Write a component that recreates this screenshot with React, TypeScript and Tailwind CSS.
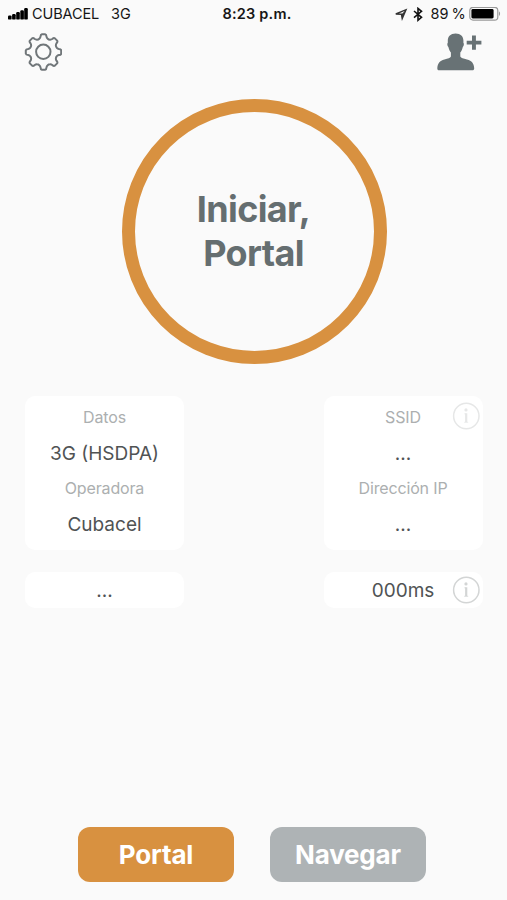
const gearTeeth = 8;

function gearPath(cx: number, cy: number) {
  const point = (angle: number, r: number, t: number) => {
    const x = cx + r * Math.cos(angle) - t * Math.sin(angle);
    const y = cy + r * Math.sin(angle) + t * Math.cos(angle);
    return `${x.toFixed(2)} ${y.toFixed(2)}`;
  };
  let d = "";
  for (let i = 0; i < gearTeeth; i++) {
    const a = (i * 2 * Math.PI) / gearTeeth - Math.PI / 2;
    const mid = a + Math.PI / gearTeeth;
    d += `${i === 0 ? "M" : "L"}${point(a, 13.3, -4.2)}`;
    d += `Q${point(a, 14.2, -3.2)} ${point(a, 15.4, -3)}`;
    d += `Q${point(a, 17.5, -2.9)} ${point(a, 17.7, -1.6)}`;
    d += `L${point(a, 17.7, 1.6)}`;
    d += `Q${point(a, 17.5, 2.9)} ${point(a, 15.4, 3)}`;
    d += `Q${point(a, 14.2, 3.2)} ${point(a, 13.3, 4.2)}`;
    d += `Q${point(mid, 13.4, 0)} ${point(a + (2 * Math.PI) / gearTeeth, 13.3, -4.2)}`;
  }
  return d + "Z";
}

function GearIcon() {
  return (
    <svg width="38" height="38" viewBox="0 0 38 38" fill="none" stroke="#707679" strokeWidth="2" strokeLinejoin="round">
      <path d={gearPath(19.5, 19)} />
      <circle cx="19.3" cy="18.8" r="7.2" />
    </svg>
  );
}

function AddUserIcon() {
  return (
    <svg width="45" height="38" viewBox="0 0 45 38" fill="#687275">
      <path d="M18.6 0.4C23.6 0.4 26.4 3.3 26.4 7.6V9.8C27.2 10.4 27 13.2 25.8 13.9C25.2 16.6 24.4 18.1 23.3 19.4V23.6C24 25.2 26.3 25.6 30 26.4C34.9 27.6 36.9 30.2 37.2 35.2C37.2 36.7 36.6 37.3 35.2 37.3H2.2C0.8 37.3 0.3 36.7 0.3 35.2C0.6 30.2 2.6 27.6 7.4 26.4C11.1 25.6 13.2 25.2 13.9 23.6V19.4C12.8 18.1 12 16.6 11.4 13.9C10.2 13.2 10 10.4 10.8 9.8V7.6C10.8 3.3 13.6 0.4 18.6 0.4Z" />
      <path d="M35 2.4H38.9V7.7H44.4V11.5H38.9V16.8H35V11.5H29.7V7.7H35Z" />
    </svg>
  );
}

function InfoIcon({ className }: { className: string }) {
  return (
    <svg width="28" height="28" viewBox="0 0 28 28" fill="none" className={className}>
      <circle cx="14.3" cy="14" r="12.7" stroke="currentColor" strokeWidth="1.5" />
      <circle cx="14" cy="7.9" r="1.6" fill="currentColor" />
      <path d="M14.2 11.3V20.2" stroke="currentColor" strokeWidth="2.2" />
      <path d="M12.4 11.8H14.2M12.2 20.3H16.2" stroke="currentColor" strokeWidth="0.8" />
    </svg>
  );
}

function StatusBar() {
  return (
    <div className="grid h-7 grid-cols-[1fr_auto_1fr] items-center pl-2 pr-1.5 text-[14.5px] leading-none text-[#161616]">
      <div className="flex items-center">
        <svg width="20" height="12" viewBox="0 0 20 12" fill="#000">
          <rect x="0" y="7.4" width="3.6" height="4.2" rx="1.2" />
          <rect x="4.1" y="6" width="3.6" height="5.6" rx="1.2" />
          <rect x="8.2" y="4" width="3.6" height="7.6" rx="1.2" />
          <rect x="12.3" y="2.2" width="3.6" height="9.4" rx="1.2" />
          <rect x="16.2" y="0" width="3.6" height="11.6" rx="1.2" />
        </svg>
        <span className="ml-1 w-[79px] tracking-[-0.1px]">CUBACEL</span>
        <span>3G</span>
      </div>
      <span className="pl-[5px] font-semibold tracking-[0.2px]">8:23 p.m.</span>
      <div className="flex items-center justify-end">
        <svg width="13" height="13" viewBox="0 0 13 13" fill="none" stroke="#333" strokeWidth="1.4">
          <path d="M0.8 6L11 1.7L7.2 10.6L6.4 6.2Z" />
          <path d="M6.5 6.2L11 2L7.3 10Z" fill="#333" stroke="none" />
        </svg>
        <svg width="10" height="15" viewBox="0 0 10 15" fill="none" stroke="#111" strokeWidth="1.6" className="ml-[5px]">
          <path d="M1 4L8.5 10.3L5 13.2V1.4L8.5 4.3L1 10.6" />
        </svg>
        <span className="ml-[7px] tracking-[0.2px] [word-spacing:-1.5px]">89 %</span>
        <svg width="32" height="14" viewBox="0 0 32 14" className="ml-[3px]">
          <rect x="0.8" y="0.3" width="28" height="12.8" rx="3.2" fill="none" stroke="#999" strokeWidth="1.2" />
          <rect x="2.4" y="2" width="22.2" height="9.4" rx="1.4" fill="#000" />
          <path d="M30 4.6C31.4 5.1 31.4 8.5 30 9Z" fill="#999" />
        </svg>
      </div>
    </div>
  );
}

const connections = [
  {
    id: "mobile",
    rows: [
      { label: "Datos", value: "3G (HSDPA)" },
      { label: "Operadora", value: "Cubacel" },
    ],
    result: "...",
    info: false,
  },
  {
    id: "wifi",
    rows: [
      { label: "SSID", value: "..." },
      { label: "Dirección IP", value: "..." },
    ],
    result: "000ms",
    info: true,
  },
];

export default function App() {
  return (
    <div className="flex h-[900px] w-[507px] flex-col overflow-hidden bg-[#fafafa] font-['Inter',sans-serif]">
      <StatusBar />

      <header className="flex h-[45px] items-start justify-between pl-6 pr-[25px] pt-[5px]">
        <button aria-label="Ajustes">
          <GearIcon />
        </button>
        <button aria-label="Agregar usuario">
          <AddUserIcon />
        </button>
      </header>

      <button className="ml-[122px] mt-[26px] flex size-[265px] shrink-0 items-center justify-center rounded-full border-[13px] border-[#d89140] pr-0.5 text-center text-[36px] font-bold leading-[43.5px] tracking-[-0.65px] text-[#656e70]">
        <span>
          Iniciar,
          <br />
          Portal
        </span>
      </button>

      <main className="mt-8 flex justify-between pl-[25px] pr-[24.5px]">
        {connections.map((item) => (
          <section key={item.id} className="flex w-[159px] flex-col gap-[22px] text-center">
            <div className="relative h-[154px] rounded-[10px] bg-white pt-1">
              {item.rows.map((row) => (
                <div key={row.label} className="h-[71px]">
                  <p className="h-9 text-base leading-[35px] tracking-[-0.15px] text-[#acafb0]">{row.label}</p>
                  <p className="text-[19px] leading-9 text-[#505354]">{row.value}</p>
                </div>
              ))}
              {item.info && <InfoIcon className="absolute right-[3px] top-1.5 text-[#e6e7e7]" />}
            </div>
            <div className="relative h-9 rounded-[10px] bg-white text-[19px] leading-[38px] text-[#505354]">
              {item.result}
              {item.info && <InfoIcon className="absolute right-[3px] top-1 text-[#d3d5d5]" />}
            </div>
          </section>
        ))}
      </main>

      <footer className="mb-[18px] mt-auto flex gap-9 pl-[78px] text-[26px] font-bold tracking-[-0.2px] text-white">
        <button className="h-[55px] w-[156px] rounded-[12px] bg-[#d89140]">Portal</button>
        <button className="h-[55px] w-[156px] rounded-[12px] bg-[#aeb3b5]">Navegar</button>
      </footer>
    </div>
  );
}
